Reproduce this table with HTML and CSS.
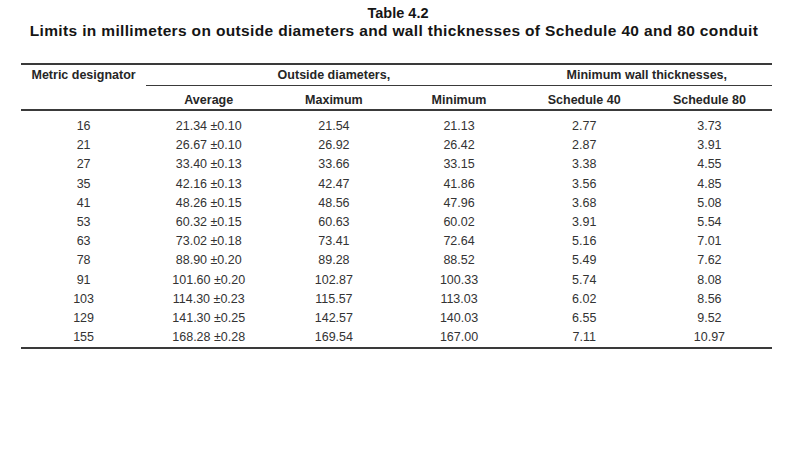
FILE: index.html
```html
<!DOCTYPE html>
<html lang="en">
<head>
<meta charset="utf-8">
<title>Table 4.2</title>
<link rel="stylesheet" href="styles.css">
</head>
<body>
<header class="caption">
  <div class="caption-title">Table 4.2</div>
  <div class="caption-sub">Limits in millimeters on outside diameters and wall thicknesses of Schedule 40 and 80 conduit</div>
</header>
<table class="limits">
  <colgroup>
    <col><col><col><col><col><col>
  </colgroup>
  <thead>
    <tr class="group-row">
      <th class="plain">Metric designator</th>
      <th class="group" colspan="3">Outside diameters,</th>
      <th class="group" colspan="2">Minimum wall thicknesses,</th>
    </tr>
    <tr class="sub-row">
      <th></th>
      <th>Average</th>
      <th>Maximum</th>
      <th>Minimum</th>
      <th>Schedule 40</th>
      <th>Schedule 80</th>
    </tr>
  </thead>
  <tbody>
    <tr class="first"><td>16</td><td>21.34 ±0.10</td><td>21.54</td><td>21.13</td><td>2.77</td><td>3.73</td></tr>
    <tr><td>21</td><td>26.67 ±0.10</td><td>26.92</td><td>26.42</td><td>2.87</td><td>3.91</td></tr>
    <tr><td>27</td><td>33.40 ±0.13</td><td>33.66</td><td>33.15</td><td>3.38</td><td>4.55</td></tr>
    <tr><td>35</td><td>42.16 ±0.13</td><td>42.47</td><td>41.86</td><td>3.56</td><td>4.85</td></tr>
    <tr><td>41</td><td>48.26 ±0.15</td><td>48.56</td><td>47.96</td><td>3.68</td><td>5.08</td></tr>
    <tr><td>53</td><td>60.32 ±0.15</td><td>60.63</td><td>60.02</td><td>3.91</td><td>5.54</td></tr>
    <tr><td>63</td><td>73.02 ±0.18</td><td>73.41</td><td>72.64</td><td>5.16</td><td>7.01</td></tr>
    <tr><td>78</td><td>88.90 ±0.20</td><td>89.28</td><td>88.52</td><td>5.49</td><td>7.62</td></tr>
    <tr><td>91</td><td>101.60 ±0.20</td><td>102.87</td><td>100.33</td><td>5.74</td><td>8.08</td></tr>
    <tr><td>103</td><td>114.30 ±0.23</td><td>115.57</td><td>113.03</td><td>6.02</td><td>8.56</td></tr>
    <tr><td>129</td><td>141.30 ±0.25</td><td>142.57</td><td>140.03</td><td>6.55</td><td>9.52</td></tr>
    <tr class="last"><td>155</td><td>168.28 ±0.28</td><td>169.54</td><td>167.00</td><td>7.11</td><td>10.97</td></tr>
  </tbody>
</table>
</body>
</html>
```

FILE: styles.css
```css
html, body {
  margin: 0;
  padding: 0;
  background: #ffffff;
}

body {
  font-family: "Liberation Sans", Arial, Helvetica, sans-serif;
  color: #2e2e2e;
}

.caption {
  padding-top: 4px;
  text-align: center;
  font-weight: bold;
  color: #151515;
}

.caption-title {
  font-size: 14.5px;
  line-height: 18px;
  padding-right: 4px;
}

.caption-sub {
  font-size: 15.5px;
  line-height: 18px;
  letter-spacing: 0.35px;
  white-space: nowrap;
  padding-right: 12px;
}

.limits {
  margin: 23px 0 0 21px;
  width: 751px;
  table-layout: fixed;
  border-collapse: collapse;
  border-top: 2px solid #3a3a3a;
  border-bottom: 2px solid #3a3a3a;
}

.limits th,
.limits td {
  padding: 0;
  text-align: center;
  white-space: nowrap;
}

.limits th {
  font-weight: bold;
  font-size: 12.5px;
  color: #262626;
}

.group-row th {
  height: 20px;
  line-height: 20px;
  vertical-align: middle;
}

.group-row th.group {
  border-bottom: 1.5px solid #3a3a3a;
}

.sub-row th {
  height: 18px;
  line-height: 18px;
  padding-top: 5px;
  vertical-align: top;
  border-bottom: 2px solid #3a3a3a;
}

.limits td {
  font-size: 12.5px;
  line-height: 19.2px;
  height: 19.2px;
  color: #333333;
}

.limits tr.first td {
  padding-top: 6px;
}
```
